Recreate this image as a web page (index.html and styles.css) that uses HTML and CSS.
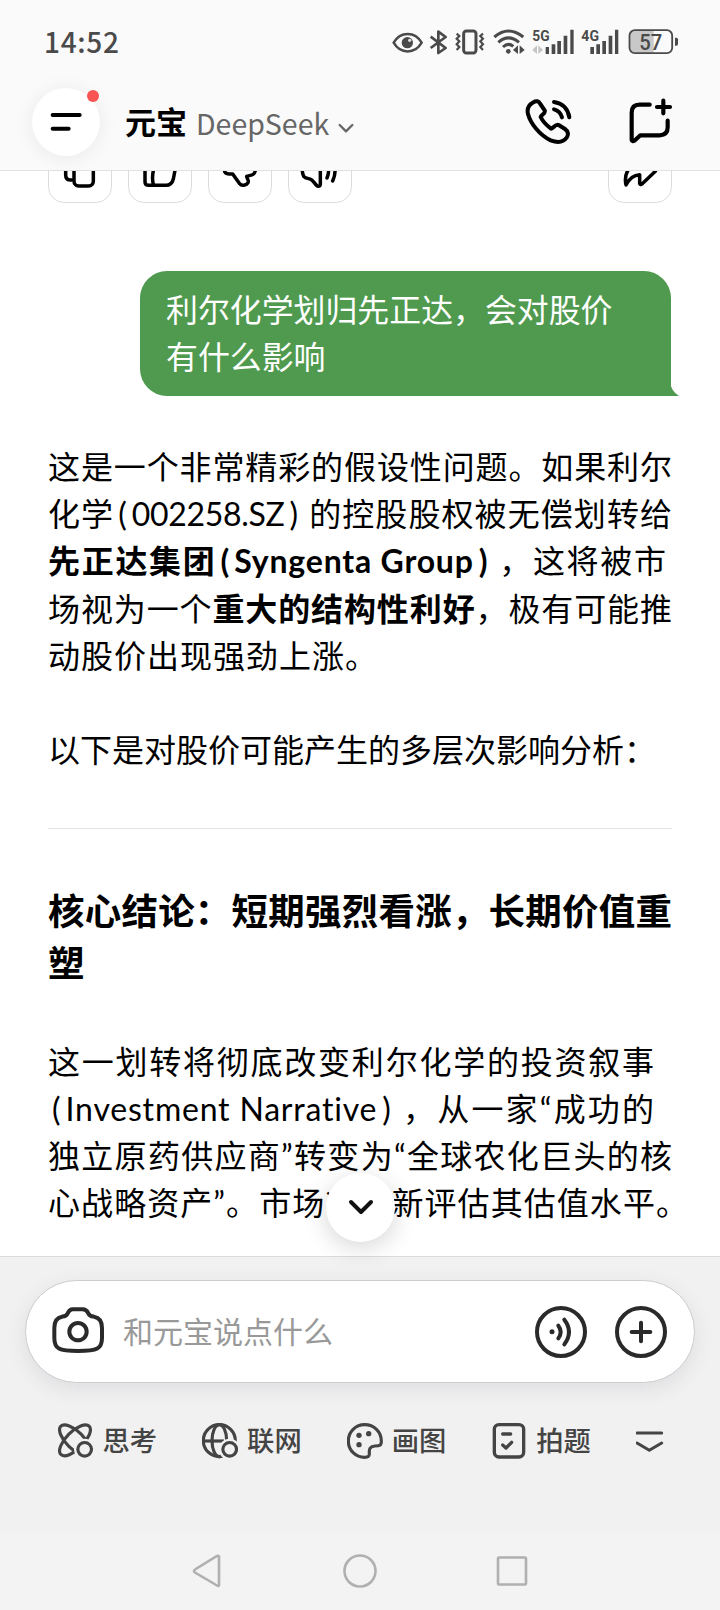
FILE: index.html
```html
<!DOCTYPE html>
<html lang="zh-CN">
<head>
  <meta charset="UTF-8">
  <meta name="viewport" content="width=device-width, initial-scale=1.0">
  <title>元宝</title>
  <link rel="stylesheet" href="styles.css">
</head>
<body>
  <div class="screen">
    <header class="header">
      <div class="status-bar">
        <span class="time">14:52</span>
        <div class="status-icons">
          <svg width="31" height="28" viewBox="0 0 93 84"><path d="M5 44C25 9 69 9 89 44C69 79 25 79 5 44Z" fill="none" stroke="#4a4a4a" stroke-width="7.500"/><circle cx="46" cy="44" r="17" fill="#4a4a4a"/><circle cx="53" cy="37" r="5" fill="#ddd"/></svg>
          <svg width="20" height="28" viewBox="0 0 60 84"><path d="M5 26L50 60L28 75V11L50 27L5 60" fill="none" stroke="#4a4a4a" stroke-width="8" stroke-linejoin="round"/></svg>
          <svg width="32.3" height="28" viewBox="0 0 97 84"><g fill="none" stroke="#4a4a4a"><rect x="26" y="9" width="37" height="66" rx="8" stroke-width="9"/><path d="M5 17l8 7-8 8 8 8-8 9 8 8-8 9M84 17l-8 7 8 8-8 8 8 9-8 8 8 9" stroke-width="6.500"/></g></svg>
          <svg width="32.3" height="28" viewBox="0 0 97 84"><g fill="none" stroke="#4a4a4a" stroke-width="9"><path d="M4 27Q46-9 91 27M16 43Q46 16 78 43M30 57Q46 42 61 55"/></g><circle cx="46" cy="70" r="7" fill="#4a4a4a"/><path d="M75 52v26l-15-12zM80 52v26l15-12z" fill="#4a4a4a"/></svg>
          <svg width="43.3" height="28" viewBox="0 0 130 84"><text x="1" y="38" class="net" textLength="52" lengthAdjust="spacingAndGlyphs">5G</text><path d="M15 52v26L1 66zM19 52v26l14-12z" fill="#c4c4c4"/><path d="M41 57h10v21H41zM59 49h11v29H59zM76 39h11v39H76zM95 23h11v55H95zM115 5h10v73h-10z" fill="#4a4a4a"/></svg>
          <svg width="41.3" height="28" viewBox="0 0 124 84"><text x="1" y="38" class="net" textLength="53" lengthAdjust="spacingAndGlyphs">4G</text><path d="M28 57h11v21H28zM46 49h11v29H46zM64 39h11v39H64zM83 23h11v55H83zM102 5h10v73h-10z" fill="#4a4a4a"/></svg>
          <svg width="50.7" height="28" viewBox="0 0 152 84"><path d="M20 8H77V74H20Q7 72 7 61V21Q7 8 20 8Z" fill="#c8c8c8"/><rect x="4.500" y="6.500" width="128" height="69" rx="16" fill="none" stroke="#4a4a4a" stroke-width="5.500"/><path d="M141 29h4q5 0 5 5v14q0 5-5 5h-4z" fill="#4a4a4a"/><text x="34" y="66" class="battery" textLength="69" lengthAdjust="spacingAndGlyphs">57</text></svg>
        </div>
      </div>
      <div class="top-bar">
        <button class="menu-btn">
          <svg width="68" height="68" viewBox="0 0 204 204"><path d="M62 81H143M62 122H110" stroke="#000" stroke-width="12" stroke-linecap="round"/></svg>
          <i class="dot"></i>
        </button>
        <div class="title">
          <b>元宝</b>
          <span>DeepSeek</span>
          <svg width="18" height="14" viewBox="0 0 54 42"><path d="M8 12L27 31L46 12" fill="none" stroke="#666" stroke-width="7" stroke-linecap="round" stroke-linejoin="round"/></svg>
        </div>
        <div class="top-actions">
          <svg width="48" height="48" viewBox="0 0 144 144"><g fill="none" stroke="#000" stroke-width="12" stroke-linecap="round" stroke-linejoin="round"><path d="M28 13C37 7 44 9 49 18L62 37C66 46 52 50 50 57C56 70 68 82 81 92C89 91 94 77 104 81L123 93C133 100 134 110 128 119C117 134 98 134 80 127C48 112 20 78 12 48C8 32 14 21 28 13Z"/><path d="M90 12C114 15 132 32 136 58M90 34C102 37 110 44 114 58"/></g></svg>
          <svg width="48" height="48" viewBox="0 0 144 144"><g fill="none" stroke="#000" stroke-width="12.500" stroke-linecap="round" stroke-linejoin="round"><path d="M68 20H38Q14 20 14 44V126Q15 133 24 127L40 112H98Q122 111 122 88V68M109 8V46M90 27H129"/></g></svg>
        </div>
      </div>
    </header>

    <main class="chat">
      <div class="actions">
        <button class="action"><svg width="64" height="64" viewBox="0 0 192 192"><rect x="78" y="60" width="58" height="81" rx="14"/><path d="M72 123H66Q53 122 53 108V64Q53 50 67 50H106"/></svg></button>
        <button class="action"><svg width="64" height="64" viewBox="0 0 192 192"><path d="M51 92Q51 82 60 82H76L94 52Q112 54 108 78H134Q144 82 141 94L136 120Q131 139 114 139H62Q51 139 51 128ZM79 84Q70 112 76 137"/></svg></button>
        <button class="action"><svg width="64" height="64" viewBox="0 0 192 192"><path d="M50 98C56 109 66 104 74 105L94 133C101 142 114 140 120 131C124 124 116 118 116 112C124 108 140 112 142 94L136 60Q134 52 120 52H64Q50 52 50 66Z"/></svg></button>
        <button class="action"><svg width="64" height="64" viewBox="0 0 192 192"><path d="M97 52V136Q97 143 88 141C80 136 76 122 66 120C58 118 52 118 47 112Q43 104 43 94Q43 76 62 74Q72 66 80 56Q88 48 97 52ZM118 76Q126 96 117 117M135 64Q148 96 134 126"/></svg></button>
        <button class="action share"><svg width="64" height="64" viewBox="0 0 192 192"><path d="M61 92C53 104 51 124 54 138C62 122 74 108 95 107V133Q97 139 102 135L142 97L102 55V75C82 76 69 80 61 92Z"/></svg></button>
      </div>

      <div class="bubble">
        <p>利尔化学划归先正达，会对股价<br>有什么影响</p>
        <svg class="tail" width="9" height="14" viewBox="0 0 9 14"><path d="M0 0Q1 9 9 14H0Z" fill="#4f9a4f"/></svg>
      </div>

      <article class="answer">
        <p>
          <span class="line">这是一个非常精彩的假设性问题。如果利尔</span>
          <span class="line">化学<i class="open">(</i><i class="code">002258.SZ</i><i class="close">)</i>的控股股权被无偿划转给</span>
          <span class="line w-618"><b>先正达集团<i class="open">(</i><i class="latin">Syngenta Group</i><i class="close">)</i></b>，这将被市</span>
          <span class="line">场视为一个<b>重大的结构性利好</b>，极有可能推</span>
          <span class="line loose">动股价出现强劲上涨。</span>
        </p>
        <p>以下是对股价可能产生的多层次影响分析：</p>
        <hr>
        <h2>
          <span class="line">核心结论：短期强烈看涨，长期价值重</span>
          <span class="line loose">塑</span>
        </h2>
        <p>
          <span class="line w-606">这一划转将彻底改变利尔化学的投资叙事</span>
          <span class="line w-606"><i class="open">(</i><i class="latin">Investment Narrative</i><i class="close">)</i>，从一家“成功的</span>
          <span class="line">独立原药供应商”转变为“全球农化巨头的核</span>
          <span class="line w-640">心战略资产”。市场将重新评估其估值水平。</span>
        </p>
      </article>

      <button class="scroll-btn"><svg width="28" height="20" viewBox="0 0 28 20"><path d="M4 4L14 14L24 4" fill="none" stroke="#111" stroke-width="4" stroke-linecap="round" stroke-linejoin="round"/></svg></button>
    </main>

    <footer class="footer">
      <div class="input-bar">
        <svg width="56" height="56" viewBox="0 0 168 168"><g fill="none" stroke="#2a2a2a" stroke-width="12" stroke-linejoin="round"><path d="M68 16H98C108 16 111 20 115 28C119 37 124 37 132 38C150 41 156 54 156 72V102C156 134 142 141 84 141C26 141 13 134 13 102V72C13 54 19 41 36 38C44 37 49 37 53 28C57 20 60 16 68 16Z"/><circle cx="84" cy="83" r="26"/></g></svg>
        <span class="placeholder">和元宝说点什么</span>
        <svg width="52" height="52" viewBox="0 0 156 156"><g fill="none" stroke="#2a2a2a" stroke-width="12" stroke-linecap="round"><circle cx="78" cy="78" r="72"/><path d="M70 59Q84 77 70 97M88 41Q116 77 88 115"/></g><circle cx="51" cy="77" r="7.500" fill="#2a2a2a"/></svg>
        <svg width="52" height="52" viewBox="0 0 156 156"><g fill="none" stroke="#2a2a2a" stroke-width="12" stroke-linecap="round"><circle cx="78" cy="78" r="72"/><path d="M50 78H106M78 50V106"/></g></svg>
      </div>
      <div class="chips">
        <div class="chip">
          <svg width="36" height="36" viewBox="0 0 108 108"><g fill="none" stroke="#444" stroke-width="9.500"><ellipse cx="51" cy="52" rx="60" ry="26" transform="rotate(45 51 52)"/><ellipse cx="51" cy="52" rx="60" ry="26" transform="rotate(-45 51 52)"/><circle cx="80" cy="79" r="26" fill="#f1f1f1" stroke="#f1f1f1" stroke-width="12"/><circle cx="80" cy="79" r="20.500"/></g></svg>
          <span>思考</span>
        </div>
        <div class="chip">
          <svg width="36" height="36" viewBox="0 0 108 108"><g fill="none" stroke="#444" stroke-width="9.500"><circle cx="52" cy="53" r="48"/><ellipse cx="52" cy="53" rx="22" ry="48"/><path d="M4 54H66"/><circle cx="83" cy="79" r="26" fill="#f1f1f1" stroke="#f1f1f1" stroke-width="12"/><circle cx="83" cy="79" r="20.500"/></g></svg>
          <span>联网</span>
        </div>
        <div class="chip">
          <svg width="36" height="36" viewBox="0 0 108 108"><path d="M53 5C81 5 103 26 103 54C103 68 98 69 84 69C69 70 66 78 67 90C68 101 62 103 53 103C26 103 4 82 4 54C4 26 26 5 53 5Z" fill="none" stroke="#444" stroke-width="9.500"/><g fill="#444"><circle cx="65" cy="32" r="8"/><circle cx="36" cy="37" r="8"/><circle cx="36" cy="65" r="8"/></g></svg>
          <span>画图</span>
        </div>
        <div class="chip">
          <svg width="36" height="36" viewBox="0 0 108 108"><g fill="none" stroke="#444" stroke-width="10" stroke-linecap="round" stroke-linejoin="round"><rect x="10" y="5" width="88" height="97" rx="14"/><path d="M35 33H59M35 66L45 75L62 58"/></g></svg>
          <span>拍题</span>
        </div>
        <svg width="28" height="36" viewBox="0 0 84 108"><path d="M3 30H77M3 60L40 82L77 60" fill="none" stroke="#444" stroke-width="9" stroke-linecap="round" stroke-linejoin="round"/></svg>
      </div>
      <nav class="nav">
        <svg width="34" height="36" viewBox="0 0 34 36"><path d="M28 3.500V32.500Q27.500 33.500 26 32.500L4 19.500Q2 18 4 16.500L26 3Q27.500 2.500 28 3.500Z"/></svg>
        <svg width="34" height="36" viewBox="0 0 34 36"><circle cx="17" cy="18" r="15.500"/></svg>
        <svg width="34" height="36" viewBox="0 0 34 36"><rect x="3" y="4.500" width="28" height="27" rx="1"/></svg>
      </nav>
    </footer>
  </div>
</body>
</html>
```
FILE: styles.css
```css
* {
  box-sizing: border-box;
}
body {
  margin: 0;
  background: #fff;
  font-family: Lato, "Noto Sans CJK SC", sans-serif;
  font-variant-ligatures: none;
  color: #000;
}
svg {
  display: block;
  flex: none;
}
button {
  padding: 0;
  border: none;
  background: #fff;
}
p, h2 {
  margin: 0;
}
i {
  font-style: normal;
}
.screen {
  width: 720px;
  height: 1610px;
  display: flex;
  flex-direction: column;
  overflow: hidden;
}

/* header */
.header {
  height: 171px;
  flex: none;
  background: #fafafa;
  border-bottom: 1px solid #e2e2e2;
}
.status-bar {
  display: flex;
  justify-content: space-between;
  padding: 28px 41px 0 44px;
  height: 84px;
}
.time {
  font-family: "Noto Sans CJK SC", sans-serif;
  font-size: 28px;
  line-height: 27px;
  font-weight: 500;
  letter-spacing: 0.7px;
  color: #4a4a4a;
}
.status-icons {
  display: flex;
  gap: 6px;
}
.net {
  font: bold 43px Roboto, sans-serif;
  fill: #4a4a4a;
}
.battery {
  font: 500 67px Roboto, sans-serif;
  fill: #4a4a4a;
}
.top-bar {
  display: flex;
  align-items: center;
  padding: 4px 45px 0 32px;
}
.menu-btn {
  position: relative;
  width: 68px;
  height: 68px;
  border-radius: 50%;
  box-shadow: 0 2px 20px rgba(0, 0, 0, 0.07);
}
.dot {
  position: absolute;
  top: 2px;
  right: 1px;
  width: 12px;
  height: 12px;
  border-radius: 50%;
  background: #f85552;
}
.title {
  flex: 1;
  display: flex;
  align-items: center;
  margin-left: 25px;
}
.title b {
  font-size: 31px;
  line-height: 40px;
}
.title span {
  margin: 2px 8px 0 9px;
  font-family: "Noto Sans CJK SC", sans-serif;
  font-size: 28.5px;
  line-height: 40px;
  color: #666;
}
.title svg {
  margin-top: 11px;
}
.top-actions {
  display: flex;
  gap: 55px;
}

/* chat */
.chat {
  position: relative;
  flex: 1;
  min-height: 0;
  padding: 0 48px;
}
.actions {
  display: flex;
  gap: 16px;
  height: 32px;
  align-items: flex-end;
  overflow: hidden;
}
.action {
  width: 64px;
  height: 64px;
  flex: none;
  border: 1px solid #dcdcdc;
  border-radius: 16px;
}
.action svg {
  margin: -1px;
  fill: none;
  stroke: #000;
  stroke-width: 10.5;
  stroke-linecap: round;
  stroke-linejoin: round;
}
.share {
  margin-left: auto;
}
.bubble {
  position: relative;
  width: 531px;
  height: 125px;
  margin: 68px 0 0 92px;
  padding: 16px 26px 0;
  border-radius: 27px 27px 0 27px;
  background: #4f9a4f;
  color: #fff;
  font-size: 31.9px;
  line-height: 47px;
}
.tail {
  position: absolute;
  right: -8px;
  bottom: 0;
}
.answer {
  font-size: 32px;
  line-height: 47.2px;
}
.answer p {
  margin-top: 47px;
}
.answer hr {
  margin: 55px 0 0;
  border: none;
  border-top: 1px solid #e4e4e4;
}
.answer h2 {
  margin-top: 57px;
  font-size: 36.5px;
  line-height: 51.5px;
}
.answer h2 + p {
  margin-top: 48.5px;
}
.line {
  display: block;
  width: 624px;
  white-space: nowrap;
  text-align: justify;
  text-align-last: justify;
}
.loose {
  text-align-last: left;
  letter-spacing: 1px;
}
.w-606 {
  width: 606px;
}
.w-618 {
  width: 618px;
}
.w-640 {
  width: 640px;
}
.open {
  padding: 0 5px 0 4px;
}
.close {
  padding: 0 10px 0 5px;
}
/* inline-block keeps the word gap out of the justification */
.latin {
  display: inline-block;
  text-align-last: left;
  letter-spacing: 0.8px;
}
.code {
  letter-spacing: -0.3px;
}
.scroll-btn {
  position: absolute;
  left: 326px;
  bottom: 14px;
  width: 69px;
  height: 69px;
  display: flex;
  align-items: center;
  justify-content: center;
  border-radius: 50%;
  box-shadow: 0 6px 24px rgba(0, 0, 0, 0.16);
}

/* footer */
.footer {
  flex: none;
  height: 354px;
  display: flex;
  flex-direction: column;
  background: #f1f1f1;
  border-top: 1px solid #dcdcdc;
}
.input-bar {
  display: flex;
  align-items: center;
  height: 103px;
  flex: none;
  margin: 23px 25px 0;
  padding: 0 27px 0 24px;
  border: 1px solid #ccc;
  border-radius: 52px;
  background: #fff;
  box-shadow: 0 6px 20px rgba(60, 60, 90, 0.1);
}
.placeholder {
  flex: 1;
  margin: -3px 0 0 17px;
  font-size: 30px;
  color: #999;
}
.input-bar svg + svg {
  margin-left: 28px;
}
.chips {
  display: flex;
  align-items: center;
  gap: 45px;
  margin: 38px 0 0 57.5px;
}
.chip {
  display: flex;
  align-items: center;
  gap: 9px;
  font-size: 27.3px;
  line-height: 40px;
  font-weight: 500;
  color: #444;
}
.nav {
  display: flex;
  justify-content: center;
  gap: 118px;
  height: 78px;
  margin-top: auto;
  padding-top: 21px;
  background: #f3f3f3;
}
.nav svg {
  fill: none;
  stroke: #b0b0b0;
  stroke-width: 2.6;
}
```
